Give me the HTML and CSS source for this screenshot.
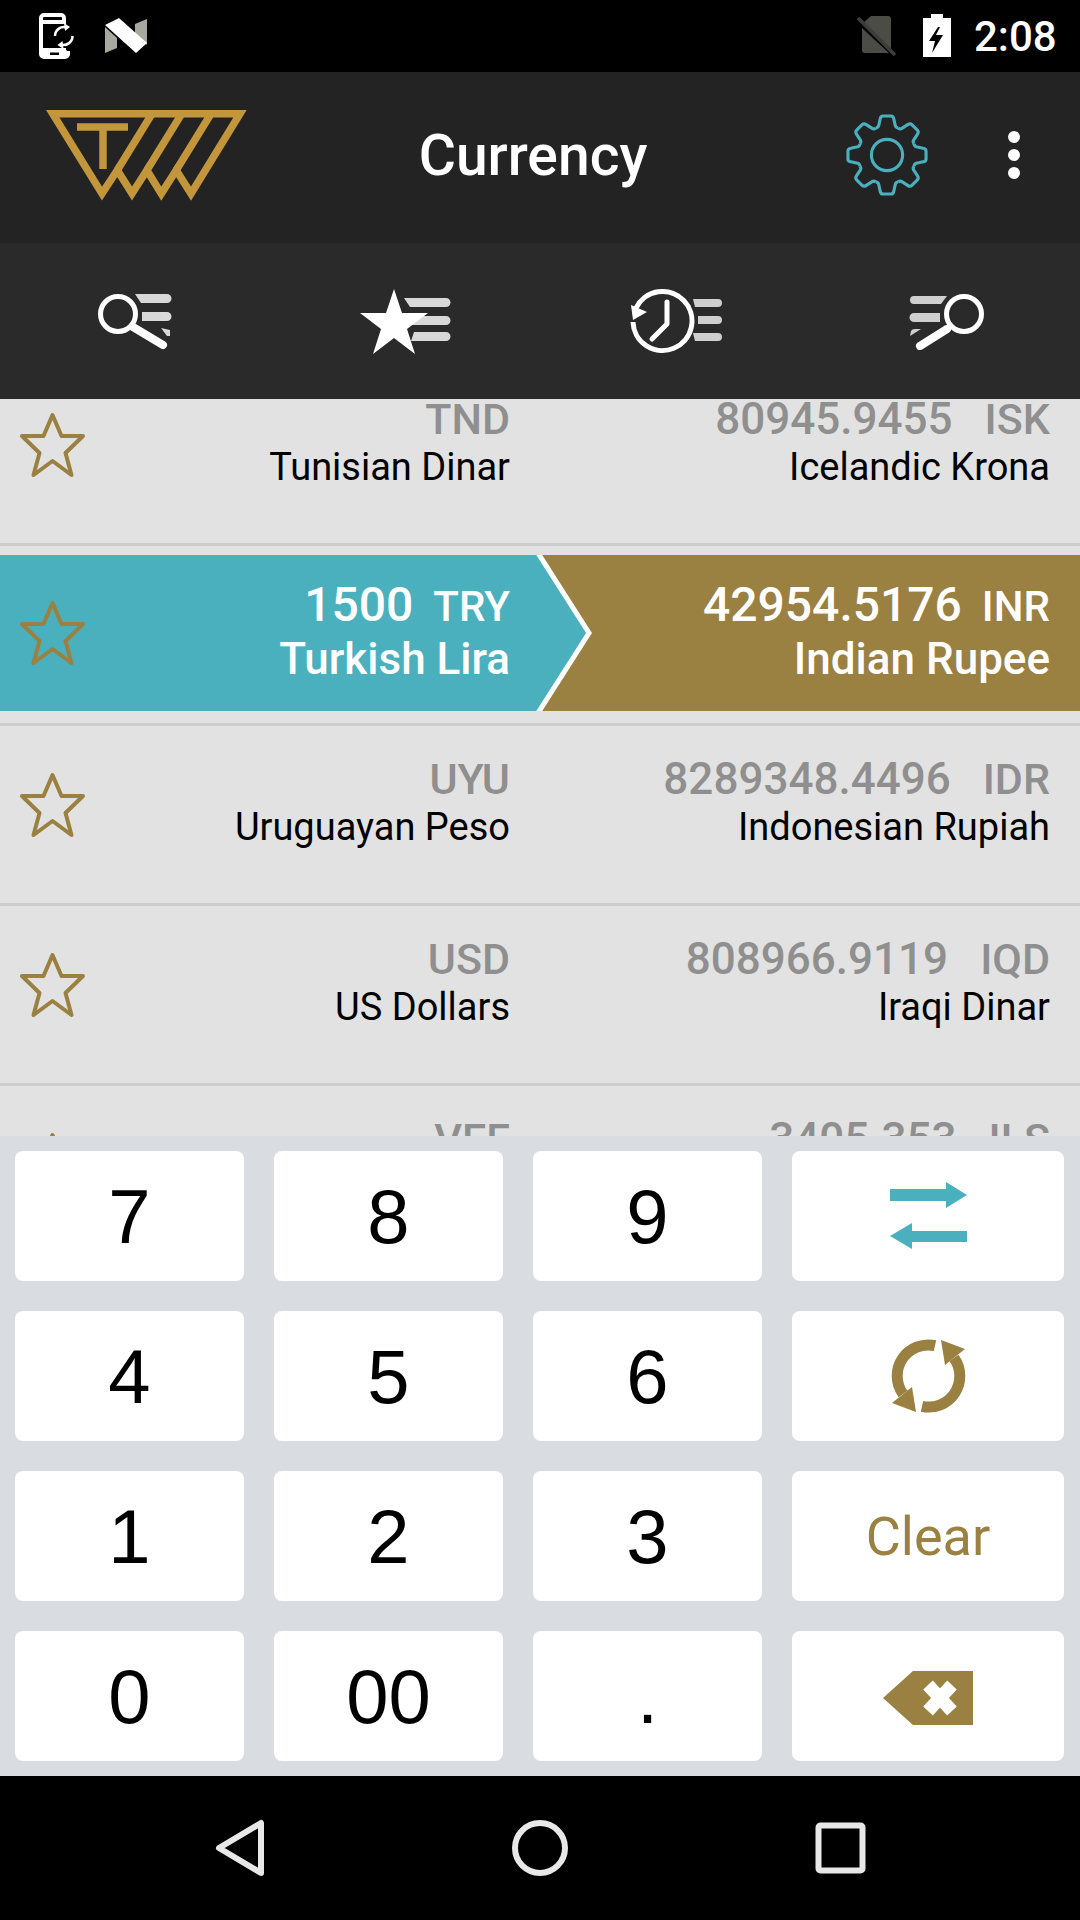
FILE: index.html
```html
<!DOCTYPE html>
<html lang="en">
<head>
    <meta charset="UTF-8">
    <meta name="viewport" content="width=device-width, initial-scale=1.0">
    <title>Currency</title>
    <link rel="stylesheet" href="styles.css">
</head>
<body>

    <!-- Status bar -->
    <div class="status-bar">
        <svg class="status-left" width="160" height="72" viewBox="0 0 160 72">
            <path d="M64 22V18a3 3 0 0 0-3-3H44a3 3 0 0 0-3 3V54a3 3 0 0 0 3 3H65a3 3 0 0 0 3-3V51M41 22H66M41 50H66" fill="none" stroke="#fff" stroke-width="4"/>
            <rect x="41" y="50" width="27" height="8" rx="3" fill="#fff"/>
            <rect x="50" y="52.500" width="9" height="2.500" fill="#000"/>
            <path d="M55 36a9 9 0 0 1 12-8.500M72.500 36a9 9 0 0 1-12 8.500" fill="none" stroke="#fff" stroke-width="2.500"/>
            <path d="M64 23l6 4-5 4zM63.500 49l-6-4 5-4z" fill="#fff"/>
            <polygon points="105,27 117,38 117,48 105,53" fill="#a8a8a0"/>
            <polygon points="135,24 147,19 147,45 135,34" fill="#a8a8a0"/>
            <polygon points="105,25 119,18 147,43 136,53" fill="#fff"/>
        </svg>
        <svg class="sim" width="40" height="42" viewBox="0 0 40 42">
            <path d="M14 1H31a3 3 0 0 1 3 3V36L6 8z" fill="#4c4c47"/>
            <path d="M5 13L32 38H8a3 3 0 0 1-3-3z" fill="#4c4c47"/>
            <path d="M1 3L38 40" stroke="#3d3d39" stroke-width="3.500"/>
        </svg>
        <svg class="battery" width="28" height="43" viewBox="0 0 28 43">
            <path d="M8 0H20V4H28V43H0V4H8z" fill="#fff"/>
            <polygon points="15,13 6,27 12,27 9,39 20,21 13,21 17,13" fill="#000"/>
        </svg>
        <span class="clock">2:08</span>
    </div>

    <!-- Toolbar -->
    <div class="toolbar">
        <svg class="logo" width="201" height="91" viewBox="0 0 201 91" fill="none" stroke="#c4963c" stroke-width="7.500">
            <path d="M6.700 3.750H194L145 83.600L130.200 60.200L115.300 83.600L100.900 60.200L86 83.600L71.300 60.200L56 83.600Z"/>
            <path d="M71.300 60.200L106 3.750M100.900 60.200L135.700 3.750M130.200 60.200L165 3.750"/>
            <path d="M31 17H82M57 17V59"/>
        </svg>
        <div class="title">Currency</div>
        <svg class="gear" width="82" height="82" viewBox="-42 -42 84 84" fill="none" stroke="#4bb0bd" stroke-width="3.200" stroke-linejoin="round">
            <defs>
                <path id="tooth" d="M-11.500-27.700Q-9-28-8.500-30L-7-37Q-6.500-40-4-40H4Q6.500-40 7-37L8.500-30Q9-28 11.500-27.700"/>
            </defs>
            <use href="#tooth"/>
            <use href="#tooth" transform="rotate(45)"/>
            <use href="#tooth" transform="rotate(90)"/>
            <use href="#tooth" transform="rotate(135)"/>
            <use href="#tooth" transform="rotate(180)"/>
            <use href="#tooth" transform="rotate(225)"/>
            <use href="#tooth" transform="rotate(270)"/>
            <use href="#tooth" transform="rotate(315)"/>
            <circle r="16"/>
        </svg>
        <div class="dots"><i></i><i></i><i></i></div>
    </div>

    <!-- Tabs -->
    <div class="tabs">
        <div class="tab">
            <svg width="76" height="56" viewBox="0 0 76 56">
                <path d="M38 0H70a4.500 4.500 0 0 1 0 9H44zM45 18H70a4.500 4.500 0 0 1 0 9H45zM64 34L73 36V42H70z" fill="#d8d8d8"/>
                <circle cx="21" cy="20" r="17.500" fill="#2a2a2a" stroke="#fff" stroke-width="5"/>
                <path d="M36 33L66 51" stroke="#fff" stroke-width="8" stroke-linecap="round"/>
            </svg>
        </div>
        <div class="tab">
            <svg width="92" height="68" viewBox="0 0 92 68">
                <path d="M45 10H87a4.500 4.500 0 0 1 0 9H51zM60 28H87a4.500 4.500 0 0 1 0 9H52zM55 44H87a4.500 4.500 0 0 1 0 9H52z" fill="#d8d8d8"/>
                <polygon points="35,1 43,25 69,25 48,41 56,66 35,50 14,66 22,41 1,25 27,25" fill="#fff"/>
            </svg>
        </div>
        <div class="tab tab-shift">
            <svg width="94" height="66" viewBox="0 0 94 66">
                <path d="M63 10H88a4 4 0 0 1 0 8H65zM68 27H88a4 4 0 0 1 0 8H68zM63 44H88a4 4 0 0 1 0 8H65z" fill="#cfcfcf"/>
                <path d="M6 19A29.500 29.500 0 1 1 3 33" fill="none" stroke="#fff" stroke-width="5"/>
                <polygon points="1,16 17,23 3,31" fill="#fff"/>
                <path d="M37 13V35L22 50" fill="none" stroke="#fff" stroke-width="5" stroke-linecap="round" stroke-linejoin="round"/>
            </svg>
        </div>
        <div class="tab tab-shift">
            <svg width="76" height="56" viewBox="0 0 76 56">
                <path d="M5 2H38L32 10H5a4 4 0 0 1 0-8zM5 19H31V28H5a4.500 4.500 0 0 1 0-9zM12 35L1 42L2 37Q3 35 6 35z" fill="#cfcfcf"/>
                <circle cx="55" cy="20" r="17.500" fill="#2a2a2a" stroke="#fff" stroke-width="5"/>
                <path d="M38 35L11 52" stroke="#fff" stroke-width="8" stroke-linecap="round"/>
            </svg>
        </div>
    </div>

    <!-- Currency list -->
    <div class="list">
        <div class="list-inner">
            <div class="row">
                <div class="row-inner">
                    <svg class="star" width="66" height="66" viewBox="0 0 66 66"><polygon points="32.500,3 41.500,24 63,24 45.500,41 51.500,63 32.500,49 13.500,63 19.500,41 2,24 23.500,24"/></svg>
                    <div class="cell cell-from"><div class="value"><span class="code">TND</span></div><div class="name">Tunisian Dinar</div></div>
                    <div class="cell cell-to"><div class="value"><span class="amount">80945.9455</span><span class="code">ISK</span></div><div class="name">Icelandic Krona</div></div>
                </div>
            </div>
            <div class="row">
                <div class="row-inner selected">
                    <svg class="chevron" width="1080" height="156" viewBox="0 0 1080 156">
                        <polygon points="0,0 539,0 591,78 539,156 0,156" fill="#4bb0bd"/>
                        <polyline points="538,-2 589,78 538,158" fill="none" stroke="#fff" stroke-width="5"/>
                    </svg>
                    <svg class="star" width="66" height="66" viewBox="0 0 66 66"><polygon points="32.500,3 41.500,24 63,24 45.500,41 51.500,63 32.500,49 13.500,63 19.500,41 2,24 23.500,24"/></svg>
                    <div class="cell cell-from"><div class="value"><span class="amount">1500</span><span class="code">TRY</span></div><div class="name">Turkish Lira</div></div>
                    <div class="cell cell-to"><div class="value"><span class="amount">42954.5176</span><span class="code">INR</span></div><div class="name">Indian Rupee</div></div>
                </div>
            </div>
            <div class="row">
                <div class="row-inner">
                    <svg class="star" width="66" height="66" viewBox="0 0 66 66"><polygon points="32.500,3 41.500,24 63,24 45.500,41 51.500,63 32.500,49 13.500,63 19.500,41 2,24 23.500,24"/></svg>
                    <div class="cell cell-from"><div class="value"><span class="code">UYU</span></div><div class="name">Uruguayan Peso</div></div>
                    <div class="cell cell-to"><div class="value"><span class="amount">8289348.4496</span><span class="code">IDR</span></div><div class="name">Indonesian Rupiah</div></div>
                </div>
            </div>
            <div class="row">
                <div class="row-inner">
                    <svg class="star" width="66" height="66" viewBox="0 0 66 66"><polygon points="32.500,3 41.500,24 63,24 45.500,41 51.500,63 32.500,49 13.500,63 19.500,41 2,24 23.500,24"/></svg>
                    <div class="cell cell-from"><div class="value"><span class="code">USD</span></div><div class="name">US Dollars</div></div>
                    <div class="cell cell-to"><div class="value"><span class="amount">808966.9119</span><span class="code">IQD</span></div><div class="name">Iraqi Dinar</div></div>
                </div>
            </div>
            <div class="row">
                <div class="row-inner">
                    <svg class="star" width="66" height="66" viewBox="0 0 66 66"><polygon points="32.500,3 41.500,24 63,24 45.500,41 51.500,63 32.500,49 13.500,63 19.500,41 2,24 23.500,24"/></svg>
                    <div class="cell cell-from"><div class="value"><span class="code">VEF</span></div></div>
                    <div class="cell cell-to"><div class="value"><span class="amount">3405.353</span><span class="code">ILS</span></div></div>
                </div>
            </div>
        </div>
    </div>

    <!-- Keypad -->
    <div class="keypad">
        <div class="key">7</div>
        <div class="key">8</div>
        <div class="key">9</div>
        <div class="key">
            <svg class="key-icon" width="78" height="68" viewBox="0 0 78 68" fill="#4bb0bd">
                <polygon points="0,7 56,7 56,0 77,13 56,26 56,19 0,19"/>
                <polygon points="77,49 22,49 22,41 0,54 22,67 22,60 77,60"/>
            </svg>
        </div>
        <div class="key">4</div>
        <div class="key">5</div>
        <div class="key">6</div>
        <div class="key">
            <svg width="80" height="80" viewBox="0 0 80 80" fill="#9a8041">
                <path d="M47 9.700A31 31 0 0 0 15 58" fill="none" stroke="#9a8041" stroke-width="11"/>
                <polygon points="28,76 4,67 24,51"/>
                <g transform="rotate(180 40.500 40)">
                    <path d="M47 9.700A31 31 0 0 0 15 58" fill="none" stroke="#9a8041" stroke-width="11"/>
                    <polygon points="28,76 4,67 24,51"/>
                </g>
            </svg>
        </div>
        <div class="key">1</div>
        <div class="key">2</div>
        <div class="key">3</div>
        <div class="key key-clear">Clear</div>
        <div class="key">0</div>
        <div class="key">00</div>
        <div class="key">.</div>
        <div class="key">
            <svg class="key-back" width="90" height="54" viewBox="0 0 90 54">
                <polygon points="0,27 30,0 90,0 90,54 30,54" fill="#9a8041"/>
                <path d="M45 14L69 40M69 14L45 40" stroke="#fff" stroke-width="13"/>
            </svg>
        </div>
    </div>

    <!-- Navigation bar -->
    <div class="nav-bar">
        <svg width="1080" height="144" viewBox="0 0 1080 144" fill="none" stroke="#e8e8e8" stroke-width="6" stroke-linejoin="round">
            <polygon points="219,72 261,47 261,97"/>
            <circle cx="540" cy="72" r="25"/>
            <rect x="818.500" y="49.500" width="44" height="45" rx="2"/>
        </svg>
    </div>

</body>
</html>
```

FILE: styles.css
```css
* {
    box-sizing: border-box;
}

body {
    font-family: 'Roboto', sans-serif;
    margin: 0;
    padding: 0;
    width: 1080px;
    height: 1920px;
    overflow: hidden;
    background: #000;
    display: flex;
    flex-direction: column;
}

svg {
    display: block;
}

/* Status bar */
.status-bar {
    height: 72px;
    background: #000;
    display: flex;
    align-items: center;
    padding-right: 25px;
}

.status-left {
    margin-right: auto;
}

.sim {
    margin-right: 26px;
}

.battery {
    margin-right: 23px;
    margin-top: -1px;
}

.clock {
    color: #fff;
    font-size: 42px;
    font-weight: 500;
    width: 81px;
    text-align: right;
    white-space: nowrap;
}

/* Toolbar */
.toolbar {
    height: 171px;
    background: #232323;
    display: flex;
    align-items: center;
    padding-left: 46px;
}

.logo {
    margin-top: -5px;
}

.title {
    width: 572px;
    text-align: center;
    color: #fff;
    font-size: 57px;
    font-weight: 500;
    margin-top: -5px;
}

.gear {
    margin-left: 27px;
    margin-top: -6px;
}

.dots {
    display: flex;
    flex-direction: column;
    gap: 6px;
    margin-left: 80px;
    margin-top: -6px;
}

.dots i {
    display: block;
    width: 12px;
    height: 12px;
    border-radius: 50%;
    background: #fff;
}

/* Tabs */
.tabs {
    height: 156px;
    background: #2a2a2a;
    display: grid;
    grid-template-columns: repeat(4, 270px);
}

.tab {
    display: flex;
    justify-content: center;
    align-items: center;
    padding-top: 1px;
}

.tab-shift {
    padding-left: 4px;
}

/* List */
.list {
    height: 737px;
    overflow: hidden;
    background: #e2e2e2;
}

.list-inner {
    margin-top: -33px;
}

.row {
    height: 180px;
    border-bottom: 3px solid #cccccc;
    display: flow-root;
}

.row-inner {
    position: relative;
    height: 177px;
    display: flex;
    padding-top: 28px;
}

.row-inner.selected {
    height: 156px;
    margin-top: 9px;
    padding-top: 25px;
    background: #9a8041;
    color: #fff;
}

.chevron {
    position: absolute;
    left: 0;
    top: 0;
}

.star {
    position: relative;
    flex: none;
    margin: 18px 0 0 20px;
    fill: none;
    stroke: #9a8041;
    stroke-width: 4;
    stroke-linejoin: round;
}

.selected .star {
    margin-top: 20px;
}

.cell {
    position: relative;
    text-align: right;
}

.cell-from {
    width: 424px;
}

.cell-to {
    width: 540px;
}

.value {
    height: 50px;
    line-height: 50px;
    color: #8f8f8f;
    font-size: 44px;
    font-weight: 500;
}

.code {
    font-size: 43px;
}

.amount {
    margin-right: 32px;
}

.name {
    height: 46px;
    line-height: 46px;
    font-size: 38px;
    color: #000;
}

.selected .value {
    color: #fff;
    font-size: 48px;
}

.selected .code {
    font-size: 42px;
}

.selected .amount {
    margin-right: 20px;
}

.selected .name {
    color: #fff;
    font-size: 44px;
    font-weight: 500;
    margin-top: 6px;
}

/* Keypad */
.keypad {
    height: 640px;
    background: #d9dce1;
    padding: 15px 16px 15px 15px;
    display: grid;
    grid-template-columns: 229px 229px 229px 272px;
    grid-auto-rows: 130px;
    gap: 30px;
}

.key {
    background: #fff;
    border-radius: 8px;
    display: flex;
    justify-content: center;
    align-items: center;
    font-family: 'Liberation Sans', sans-serif;
    font-size: 76px;
    color: #000;
}

.key-icon {
    margin-left: 2px;
}

.key-back {
    margin-top: 4px;
}

.key-clear {
    font-family: 'Roboto', sans-serif;
    font-size: 54px;
    color: #9a8041;
}

/* Navigation bar */
.nav-bar {
    height: 144px;
    background: #000;
}
```
